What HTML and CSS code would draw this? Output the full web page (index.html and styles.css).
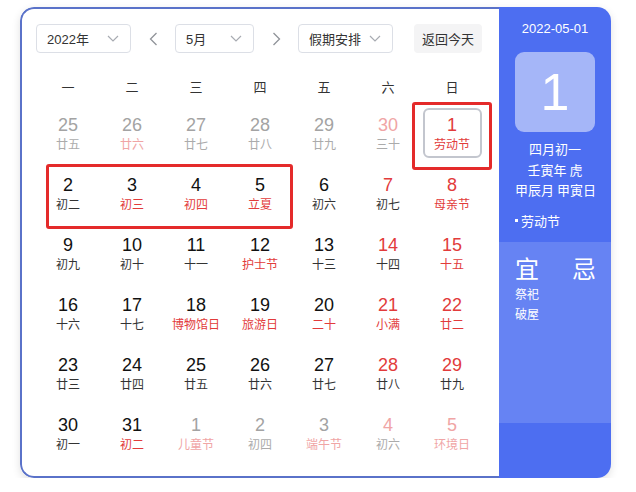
FILE: index.html
```html
<!DOCTYPE html>
<html lang="zh-CN">
<head>
<meta charset="utf-8">
<title>万年历</title>
<link rel="stylesheet" href="styles.css">
</head>
<body>
<div class="calendar">
  <div class="main">
    <div class="toolbar">
      <div class="select sel-year"><span>2022年</span><svg class="chev" width="12" height="7" viewBox="0 0 12 7"><path d="M1 1l5 5 5-5" fill="none" stroke="#a8abb2" stroke-width="1.2"/></svg></div>
      <div class="arrow"><svg width="9" height="14" viewBox="0 0 9 14"><path d="M7.5 1L1.5 7l6 6" fill="none" stroke="#909399" stroke-width="1.3"/></svg></div>
      <div class="select sel-month"><span>5月</span><svg class="chev" width="12" height="7" viewBox="0 0 12 7"><path d="M1 1l5 5 5-5" fill="none" stroke="#a8abb2" stroke-width="1.2"/></svg></div>
      <div class="arrow"><svg width="9" height="14" viewBox="0 0 9 14"><path d="M1.5 1l6 6-6 6" fill="none" stroke="#909399" stroke-width="1.3"/></svg></div>
      <div class="select sel-holiday"><span>假期安排</span><svg class="chev" width="12" height="7" viewBox="0 0 12 7"><path d="M1 1l5 5 5-5" fill="none" stroke="#a8abb2" stroke-width="1.2"/></svg></div>
      <div class="today-btn">返回今天</div>
    </div>

    <div class="weekdays">
      <div>一</div><div>二</div><div>三</div><div>四</div><div>五</div><div>六</div><div>日</div>
    </div>

    <div class="days">
      <div class="cell"><div class="day"><span class="num g">25</span><span class="lun g">廿五</span></div></div>
      <div class="cell"><div class="day"><span class="num g">26</span><span class="lun lr">廿六</span></div></div>
      <div class="cell"><div class="day"><span class="num g">27</span><span class="lun g">廿七</span></div></div>
      <div class="cell"><div class="day"><span class="num g">28</span><span class="lun g">廿八</span></div></div>
      <div class="cell"><div class="day"><span class="num g">29</span><span class="lun g">廿九</span></div></div>
      <div class="cell"><div class="day"><span class="num lr">30</span><span class="lun g">三十</span></div></div>
      <div class="cell"><div class="day today"><span class="num r">1</span><span class="lun r">劳动节</span></div></div>

      <div class="cell"><div class="day"><span class="num">2</span><span class="lun">初二</span></div></div>
      <div class="cell"><div class="day"><span class="num">3</span><span class="lun r">初三</span></div></div>
      <div class="cell"><div class="day"><span class="num">4</span><span class="lun r">初四</span></div></div>
      <div class="cell"><div class="day"><span class="num">5</span><span class="lun r">立夏</span></div></div>
      <div class="cell"><div class="day"><span class="num">6</span><span class="lun">初六</span></div></div>
      <div class="cell"><div class="day"><span class="num r">7</span><span class="lun">初七</span></div></div>
      <div class="cell"><div class="day"><span class="num r">8</span><span class="lun r">母亲节</span></div></div>

      <div class="cell"><div class="day"><span class="num">9</span><span class="lun">初九</span></div></div>
      <div class="cell"><div class="day"><span class="num">10</span><span class="lun">初十</span></div></div>
      <div class="cell"><div class="day"><span class="num">11</span><span class="lun">十一</span></div></div>
      <div class="cell"><div class="day"><span class="num">12</span><span class="lun r">护士节</span></div></div>
      <div class="cell"><div class="day"><span class="num">13</span><span class="lun">十三</span></div></div>
      <div class="cell"><div class="day"><span class="num r">14</span><span class="lun">十四</span></div></div>
      <div class="cell"><div class="day"><span class="num r">15</span><span class="lun r">十五</span></div></div>

      <div class="cell"><div class="day"><span class="num">16</span><span class="lun">十六</span></div></div>
      <div class="cell"><div class="day"><span class="num">17</span><span class="lun">十七</span></div></div>
      <div class="cell"><div class="day"><span class="num">18</span><span class="lun r">博物馆日</span></div></div>
      <div class="cell"><div class="day"><span class="num">19</span><span class="lun r">旅游日</span></div></div>
      <div class="cell"><div class="day"><span class="num">20</span><span class="lun r">二十</span></div></div>
      <div class="cell"><div class="day"><span class="num r">21</span><span class="lun r">小满</span></div></div>
      <div class="cell"><div class="day"><span class="num r">22</span><span class="lun r">廿二</span></div></div>

      <div class="cell"><div class="day"><span class="num">23</span><span class="lun">廿三</span></div></div>
      <div class="cell"><div class="day"><span class="num">24</span><span class="lun">廿四</span></div></div>
      <div class="cell"><div class="day"><span class="num">25</span><span class="lun">廿五</span></div></div>
      <div class="cell"><div class="day"><span class="num">26</span><span class="lun">廿六</span></div></div>
      <div class="cell"><div class="day"><span class="num">27</span><span class="lun">廿七</span></div></div>
      <div class="cell"><div class="day"><span class="num r">28</span><span class="lun">廿八</span></div></div>
      <div class="cell"><div class="day"><span class="num r">29</span><span class="lun">廿九</span></div></div>

      <div class="cell"><div class="day"><span class="num">30</span><span class="lun">初一</span></div></div>
      <div class="cell"><div class="day"><span class="num">31</span><span class="lun r">初二</span></div></div>
      <div class="cell"><div class="day"><span class="num g">1</span><span class="lun lr">儿童节</span></div></div>
      <div class="cell"><div class="day"><span class="num g">2</span><span class="lun g">初四</span></div></div>
      <div class="cell"><div class="day"><span class="num g">3</span><span class="lun lr">端午节</span></div></div>
      <div class="cell"><div class="day"><span class="num lr">4</span><span class="lun g">初六</span></div></div>
      <div class="cell"><div class="day"><span class="num lr">5</span><span class="lun lr">环境日</span></div></div>

      <div class="mark mark-today"></div>
      <div class="mark mark-week"></div>
    </div>
  </div>

  <div class="side">
    <div class="side-top">
      <div class="side-date">2022-05-01</div>
      <div class="side-big">1</div>
      <div class="side-lunar">
        <div>四月初一</div>
        <div>壬寅年 虎</div>
        <div>甲辰月 甲寅日</div>
      </div>
      <div class="side-fest"><span class="dot"></span>劳动节</div>
    </div>
    <div class="side-mid">
      <div class="yj">
        <div class="yj-title">宜</div>
        <div class="yj-item">祭祀</div>
        <div class="yj-item">破屋</div>
      </div>
      <div class="yj">
        <div class="yj-title">忌</div>
      </div>
    </div>
    <div class="side-bottom"></div>
  </div>
</div>
</body>
</html>
```
FILE: styles.css
```css
* { box-sizing: border-box; }
html, body { margin: 0; padding: 0; background: #fff; }
body {
  font-family: "Liberation Sans", "Noto Sans CJK SC", sans-serif;
  color: #333;
}

.calendar {
  margin: 7px 0 0 20px;
  width: 591px;
  height: 471px;
  display: flex;
  border-radius: 14px;
  overflow: hidden;
  box-shadow: 0 3px 8px rgba(0, 0, 0, 0.12);
}

.main {
  flex: 1;
  border: 2px solid #5a72c9;
  border-right: none;
  border-radius: 14px 0 0 14px;
  padding: 15px 0 0 14px;
  background: #fff;
}

.toolbar {
  display: flex;
  align-items: center;
  height: 29px;
}
.select {
  height: 29px;
  border: 1px solid #dcdfe6;
  border-radius: 4px;
  display: flex;
  align-items: center;
  justify-content: space-between;
  padding: 0 11px 0 10px;
  font-size: 13px;
  color: #333;
}
.sel-year { width: 95px; }
.sel-month { width: 79px; }
.sel-holiday { width: 95px; }
.chev { display: block; }
.arrow {
  width: 44px;
  display: flex;
  justify-content: center;
  align-items: center;
}
.arrow svg { display: block; }
.today-btn {
  margin-left: 21px;
  width: 68px;
  height: 29px;
  border-radius: 4px;
  background: #f4f4f5;
  font-size: 13px;
  color: #333;
  display: flex;
  align-items: center;
  justify-content: center;
}

.weekdays {
  display: grid;
  grid-template-columns: repeat(7, 64px);
  margin-top: 13px;
  height: 40px;
  align-items: center;
  font-family: "Noto Sans CJK SC", sans-serif;
  font-size: 13px;
  color: #333;
  text-align: center;
}

.days {
  position: relative;
  display: grid;
  grid-template-columns: repeat(7, 64px);
  grid-auto-rows: 60px;
}
.cell { display: flex; justify-content: center; }
.day {
  width: 59px;
  height: 50px;
  margin-top: 2px;
  border: 2px solid transparent;
  border-radius: 6px;
  padding-top: 5px;
  display: flex;
  flex-direction: column;
  align-items: center;
}
.day.today { border-color: #c3c6ce; }
.num {
  font-size: 18px;
  line-height: 20px;
  color: #111;
}
.lun {
  font-family: "Noto Sans CJK SC", sans-serif;
  font-size: 12px;
  line-height: 18px;
  color: #333;
  white-space: nowrap;
}
.num.r, .lun.r { color: #e23b3b; }
.num.g { color: #a3a3a3; }
.lun.g { color: #ababab; }
.num.lr, .lun.lr { color: #f0a5a5; }

.mark {
  position: absolute;
  border: 3px solid #e42a2a;
  border-radius: 3px;
  pointer-events: none;
}
.mark-today { left: 376px; top: -4px; width: 80px; height: 68px; }
.mark-week { left: 10px; top: 58px; width: 247px; height: 65px; }

.side {
  width: 112px;
  display: flex;
  flex-direction: column;
  color: #fff;
  font-family: "Noto Sans CJK SC", sans-serif;
}
.side-top {
  height: 235px;
  background: #4d6ef1;
  padding: 12px 0 0 16px;
}
.side-date {
  font-family: "Liberation Sans", sans-serif;
  font-size: 13px;
  line-height: 20px;
  text-align: center;
  padding-right: 16px;
}
.side-big {
  margin-top: 13px;
  width: 80px;
  height: 80px;
  border-radius: 9px;
  background: #a5b6f8;
  font-family: "Liberation Sans", sans-serif;
  font-size: 52px;
  display: flex;
  align-items: center;
  justify-content: center;
}
.side-lunar {
  margin-top: 7px;
  font-size: 13px;
  line-height: 20.5px;
  text-align: center;
  width: 80px;
  white-space: nowrap;
}
.side-fest {
  margin-top: 10px;
  font-size: 13px;
  line-height: 20px;
  display: flex;
  align-items: center;
}
.dot {
  width: 3px;
  height: 3px;
  background: #fff;
  margin-right: 3px;
}
.side-mid {
  height: 181px;
  background: #6683f3;
  padding: 12px 0 0 16px;
  display: grid;
  grid-template-columns: 57px 40px;
  align-items: start;
}
.yj-title {
  font-size: 24px;
  line-height: 28px;
  margin-bottom: 2px;
}
.yj-item {
  font-size: 12px;
  line-height: 20px;
}
.side-bottom {
  flex: 1;
  background: #4d6ef1;
}
```
